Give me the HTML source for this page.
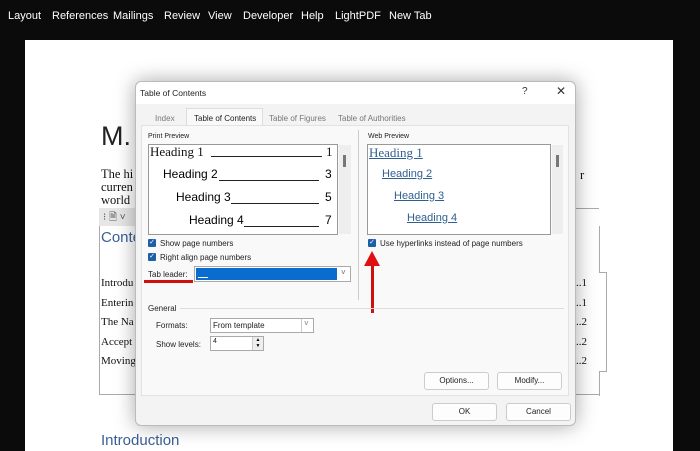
<!DOCTYPE html>
<html><head><style>
*{margin:0;padding:0;box-sizing:border-box}
body{width:700px;height:451px;background:#0b0b0b;position:relative;overflow:hidden;font-family:"Liberation Sans",sans-serif}
.a{position:absolute}
.menu{top:10px;color:#fff;font-size:11px}
.page{left:25px;top:40px;width:648px;height:411px;background:#fff}
.ser{font-family:"Liberation Serif",serif;color:#111}
.dlg{left:135px;top:81px;width:441px;height:345px;background:#f3f3f3;border:1px solid #bbb;border-radius:6px;box-shadow:0 0 20px rgba(0,0,0,.35)}
.t{font-size:8px;color:#222}
.cb{width:8px;height:8px;background:#1f5fa8;border-radius:1px;color:#fff;font-size:7px;line-height:8px;text-align:center}
.box{background:#fff;border:1px solid #999}
.btn{background:#fdfdfd;border:1px solid #ccc;border-radius:3px;font-size:8px;text-align:center;line-height:16px;color:#222}
.h{font-size:13px}
.lk{color:#2f5f90;text-decoration:underline}
</style></head><body>
<div class="a menu" style="left:8px">Layout</div>
<div class="a menu" style="left:52px">References</div>
<div class="a menu" style="left:113px">Mailings</div>
<div class="a menu" style="left:164px">Review</div>
<div class="a menu" style="left:208px">View</div>
<div class="a menu" style="left:243px">Developer</div>
<div class="a menu" style="left:301px">Help</div>
<div class="a menu" style="left:335px">LightPDF</div>
<div class="a menu" style="left:389px">New Tab</div>
<div class="a page"></div>
<div class="a" style="left:101px;top:121px;font-size:27px;color:#222">M.</div>
<div class="a ser" style="left:101px;top:168px;font-size:12.5px;line-height:13px">The hi<br>curren<br>world</div>
<div class="a ser" style="left:580px;top:168px;font-size:12.5px">r</div>
<div class="a" style="left:99px;top:208px;width:500px;height:187px;border:1px solid #aaa;border-right:none"></div>
<div class="a" style="left:599px;top:226px;width:1px;height:46px;background:#aaa"></div>
<div class="a" style="left:599px;top:272px;width:8px;height:100px;border:1px solid #aaa;border-left:none"></div>
<div class="a" style="left:599px;top:372px;width:1px;height:24px;background:#aaa"></div>
<div class="a" style="left:99px;top:208px;width:40px;height:18px;background:#e6e6e6;font-size:10px;color:#555;padding:2px 0 0 4px">⁝ 🗎 ˅</div>
<div class="a" style="left:101px;top:229px;font-size:15px;color:#3a5f95">Conte</div>
<div class="a ser" style="left:101px;top:274px;font-size:11px;line-height:19.5px">Introdu<br>Enterin<br>The Na<br>Accept<br>Moving</div>
<div class="a ser" style="left:576px;top:274px;font-size:11px;line-height:19.5px">..1<br>..1<br>..2<br>..2<br>..2</div>
<div class="a" style="left:101px;top:432px;font-size:15px;color:#3a5f95">Introduction</div>

<div class="a dlg"></div>
<div class="a" style="left:136px;top:82px;width:439px;height:22px;background:#fff;border-radius:6px 6px 0 0"></div>
<div class="a t" style="left:140px;top:88px;font-size:8.5px">Table of Contents</div>
<div class="a" style="left:522px;top:86px;font-size:10px;color:#333">?</div>
<div class="a" style="left:556px;top:84px;font-size:12px;color:#333">✕</div>
<div class="a t" style="left:155px;top:114px;color:#777">Index</div>
<div class="a" style="left:186px;top:108px;width:77px;height:18px;background:#f9f9f9;border:1px solid #ddd;border-bottom:none"></div>
<div class="a t" style="left:194px;top:114px">Table of Contents</div>
<div class="a t" style="left:269px;top:114px;color:#777">Table of Figures</div>
<div class="a t" style="left:338px;top:114px;color:#777">Table of Authorities</div>
<div class="a" style="left:141px;top:125px;width:428px;height:271px;background:#f9f9f9;border:1px solid #e2e2e2"></div>
<div class="a t" style="left:148px;top:133px;font-size:7px">Print Preview</div>
<div class="a box" style="left:148px;top:144px;width:190px;height:91px"></div>
<div class="a" style="left:339px;top:145px;width:12px;height:89px;background:#eee"></div>
<div class="a" style="left:343px;top:155px;width:3px;height:12px;background:#777"></div>
<div class="a ser h" style="left:150px;top:144px">Heading 1</div>
<div class="a ser" style="left:211px;top:156px;width:111px;height:1px;background:#222"></div>
<div class="a ser h" style="left:326px;top:144px">1</div>
<div class="a h" style="left:163px;top:167px;font-size:12px">Heading 2</div>
<div class="a" style="left:219px;top:180px;width:100px;height:1px;background:#222"></div>
<div class="a h" style="left:325px;top:167px;font-size:12px">3</div>
<div class="a h" style="left:176px;top:190px;font-size:12px">Heading 3</div>
<div class="a" style="left:231px;top:203px;width:88px;height:1px;background:#222"></div>
<div class="a h" style="left:325px;top:190px;font-size:12px">5</div>
<div class="a h" style="left:189px;top:213px;font-size:12px">Heading 4</div>
<div class="a" style="left:244px;top:226px;width:75px;height:1px;background:#222"></div>
<div class="a h" style="left:325px;top:213px;font-size:12px">7</div>
<div class="a cb" style="left:148px;top:239px">✓</div>
<div class="a t" style="left:160px;top:239px">Show page numbers</div>
<div class="a cb" style="left:148px;top:253px">✓</div>
<div class="a t" style="left:160px;top:253px">Right align page numbers</div>
<div class="a t" style="left:148px;top:270px">Tab leader:</div>
<div class="a" style="left:144px;top:280px;width:49px;height:3px;background:#d01010"></div>
<div class="a" style="left:194px;top:266px;width:157px;height:16px;background:#fff;border:1px solid #aaa"></div>
<div class="a" style="left:196px;top:268px;width:141px;height:12px;background:#0a6ccf"></div>
<div class="a" style="left:198px;top:277px;width:10px;height:1px;background:#fff"></div>
<div class="a t" style="left:341px;top:268px;color:#666">˅</div>
<div class="a" style="left:358px;top:130px;width:1px;height:170px;background:#ccc"></div>
<div class="a t" style="left:368px;top:133px;font-size:7px">Web Preview</div>
<div class="a box" style="left:367px;top:144px;width:184px;height:91px"></div>
<div class="a" style="left:552px;top:145px;width:11px;height:89px;background:#eee"></div>
<div class="a" style="left:556px;top:155px;width:3px;height:12px;background:#777"></div>
<div class="a ser lk" style="left:369px;top:145px;font-size:13px">Heading 1</div>
<div class="a lk" style="left:382px;top:168px;font-size:11px">Heading 2</div>
<div class="a lk" style="left:394px;top:190px;font-size:11px">Heading 3</div>
<div class="a lk" style="left:407px;top:212px;font-size:11px">Heading 4</div>
<div class="a cb" style="left:368px;top:239px">✓</div>
<div class="a t" style="left:380px;top:239px">Use hyperlinks instead of page numbers</div>
<svg class="a" style="left:362px;top:250px" width="20" height="64"><rect x="9" y="10" width="3" height="53" fill="#d01010"/><polygon points="10,1 2,16 18,16" fill="#e01010"/></svg>
<div class="a t" style="left:148px;top:304px">General</div>
<div class="a" style="left:180px;top:308px;width:384px;height:1px;background:#ddd"></div>
<div class="a t" style="left:156px;top:321px">Formats:</div>
<div class="a" style="left:210px;top:318px;width:104px;height:15px;background:#fff;border:1px solid #aaa"></div>
<div class="a t" style="left:213px;top:321px">From template</div>
<div class="a" style="left:301px;top:319px;width:1px;height:13px;background:#ccc"></div>
<div class="a t" style="left:304px;top:319px;color:#777">˅</div>
<div class="a t" style="left:156px;top:340px">Show levels:</div>
<div class="a" style="left:210px;top:336px;width:54px;height:15px;background:#fff;border:1px solid #aaa"></div>
<div class="a t" style="left:213px;top:338px;font-size:7px">4</div>
<div class="a" style="left:252px;top:337px;width:11px;height:13px;background:#eee;border-left:1px solid #ccc;font-size:5px;line-height:6px;text-align:center">▲<br>▼</div>
<div class="a btn" style="left:424px;top:372px;width:65px;height:18px">Options...</div>
<div class="a btn" style="left:497px;top:372px;width:65px;height:18px">Modify...</div>
<div class="a btn" style="left:432px;top:403px;width:65px;height:18px">OK</div>
<div class="a btn" style="left:506px;top:403px;width:65px;height:18px">Cancel</div>
</body></html>
